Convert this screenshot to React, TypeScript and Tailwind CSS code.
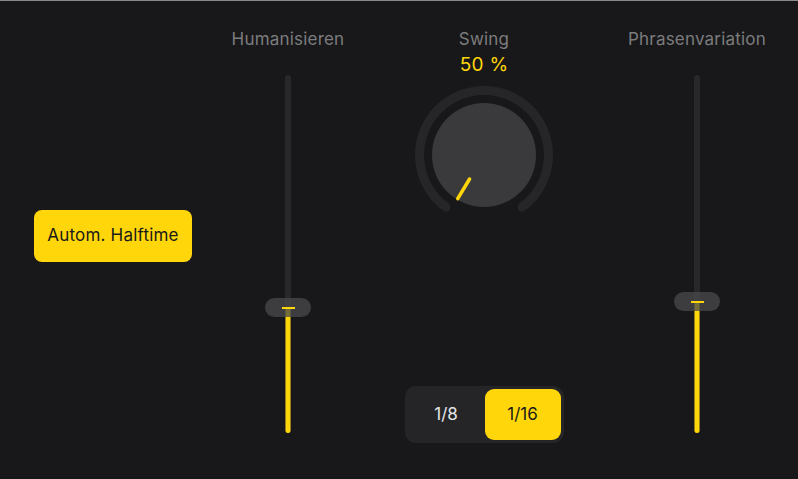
import React from 'react'

// Vertical fader with a yellow fill below the thumb
const Fader = ({ thumbTop }: { thumbTop: number }) => {
  const fill = 358 - (thumbTop + 10)
  return (
    <div className="relative w-[46px] h-[358px]">
      <div className="absolute top-0 bottom-0 left-1/2 -translate-x-1/2 w-[6px] rounded-full bg-[#28282a]"></div>
      <div
        className="absolute bottom-0 left-1/2 -translate-x-1/2 w-[5px] rounded-b-full bg-[#ffd60a]"
        style={{ height: fill }}
      ></div>
      <div
        className="absolute left-0 w-[46px] h-[19px] rounded-full bg-[#4a4a4c]/75 flex items-center justify-center"
        style={{ top: thumbTop }}
      >
        <div className="w-[13px] h-[2px] bg-[#ffd60a]"></div>
      </div>
    </div>
  )
}

const Knob = () => {
  const cx = 70
  const cy = 70
  const r = 64.5
  const a = (36 * Math.PI) / 180
  const sx = cx - r * Math.sin(a)
  const sy = cy + r * Math.cos(a)
  const ex = cx + r * Math.sin(a)
  const ey = sy
  const b = (31 * Math.PI) / 180
  return (
    <svg width="140" height="140" viewBox="0 0 140 140">
      <path
        d={`M ${sx} ${sy} A ${r} ${r} 0 1 1 ${ex} ${ey}`}
        fill="none"
        stroke="#262628"
        strokeWidth="9"
        strokeLinecap="round"
      />
      <circle cx={cx} cy={cy} r="52" fill="#3a3a3c" />
      <line
        x1={cx - 28 * Math.sin(b)}
        y1={cy + 28 * Math.cos(b)}
        x2={cx - 51 * Math.sin(b)}
        y2={cy + 51 * Math.cos(b)}
        stroke="#ffd60a"
        strokeWidth="3.5"
        strokeLinecap="round"
      />
    </svg>
  )
}

const App: React.FC = () => {
  return (
    <div
      className="w-full h-screen overflow-hidden bg-[#18181a] border-t border-[#8a8a8a] flex"
      style={{ fontFamily: 'Inter, "Liberation Sans", sans-serif' }}
    >
      {/* Halftime toggle */}
      <div className="w-[226px] pl-[34px] pt-[209px]">
        <button className="w-[158px] h-[52px] rounded-lg bg-[#ffd60a] text-[17px] tracking-[0.2px] text-[#1a1a1a]">
          Autom. Halftime
        </button>
      </div>

      {/* Humanisieren */}
      <div className="w-[124px] flex flex-col items-center pt-[28px]">
        <div className="text-[17px] leading-[20px] tracking-[0.2px] text-[#7c7c7e]">Humanisieren</div>
        <div className="mt-[26px]">
          <Fader thumbTop={223} />
        </div>
      </div>

      {/* Swing */}
      <div className="w-[268px] flex flex-col items-center pt-[28px]">
        <div className="text-[17px] leading-[20px] tracking-[0.2px] text-[#7c7c7e]">Swing</div>
        <div className="text-[19px] leading-[24px] tracking-[0.3px] text-[#ffd60a] mt-[4px]">50 %</div>
        <div className="mt-[8px]">
          <Knob />
        </div>
        <div className="mt-[161px] flex p-[3px] w-[159px] h-[57px] rounded-[11px] bg-[#252527]">
          <button className="flex-1 text-[17px] text-[#e5e5e7]">1/8</button>
          <button className="w-[76px] rounded-[9px] bg-[#ffd60a] text-[17px] text-[#1a1a1a]">1/16</button>
        </div>
      </div>

      {/* Phrasenvariation */}
      <div className="w-[158px] flex flex-col items-center pt-[28px]">
        <div className="text-[17px] leading-[20px] tracking-[0.2px] text-[#7c7c7e] whitespace-nowrap">Phrasenvariation</div>
        <div className="mt-[26px]">
          <Fader thumbTop={217} />
        </div>
      </div>
    </div>
  )
}

export default App
